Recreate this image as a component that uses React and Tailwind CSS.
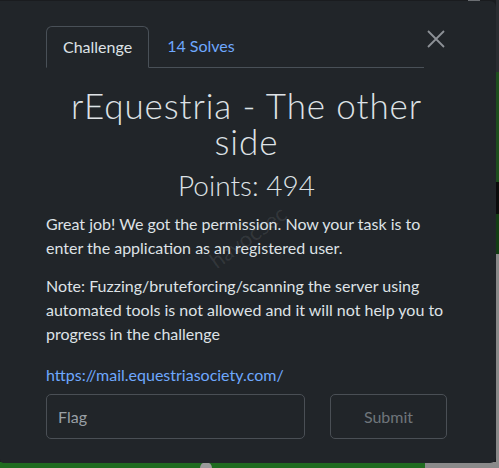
import React from 'react'

const App = () => {
  return (
    <div className="relative w-[499px] h-[468px] overflow-hidden bg-[#1a1c1f]" style={{ fontFamily: 'Lato, "Noto Sans", sans-serif' }}>
      {/* backdrop peeking out */}
      <div className="absolute right-0 top-0 w-[3px] h-full flex flex-col">
        <div className="h-[72px] bg-[#2a2d31]"></div>
        <div className="h-[110px] bg-[#1d4d1d]"></div>
        <div className="h-[32px] bg-[#0c0c0c]"></div>
        <div className="h-[40px] bg-[#143d14]"></div>
        <div className="flex-1 bg-[#8a8a8a]"></div>
      </div>
      <div className="absolute left-0 bottom-0 w-full h-[6px] flex">
        <div className="w-[425px] bg-[#1f6b1f]"></div>
        <div className="flex-1 bg-[#8a8a8a]"></div>
      </div>
      <div className="absolute left-[200px] bottom-0 w-[12px] h-[6px] bg-[#9a9a9a] rounded-t-full"></div>
      <div className="absolute left-[468px] top-0 w-[12px] h-px bg-[#6b6e72]"></div>

      {/* modal */}
      <div className="relative mt-px w-[496px] h-[462px] bg-[#212529] rounded-r-md rounded-bl-sm pl-[46px] pr-[49px] pt-[25px]">
        <button className="absolute left-[426px] top-[28px] text-[#8d9196]">
          <svg width="20" height="20" viewBox="0 0 20 20" stroke="currentColor" strokeWidth="1.8" fill="none">
            <path d="M2 2 L18 18 M18 2 L2 18" />
          </svg>
        </button>

        <div className="flex w-[378px] border-b border-[#495057] text-[16px] leading-[24px]">
          <div className="px-4 py-2 -mb-px border border-[#495057] border-b-[#212529] rounded-t-md text-[#dee2e6]">Challenge</div>
          <div className="px-[18px] py-2 text-[#6ea8fe]">14 Solves</div>
        </div>

        <h2 className="mt-[19px] text-center text-[35px] font-light leading-[36px] tracking-[0.9px] text-[#dee2e6]">
          rEquestria - The other side
        </h2>
        <h3 className="mt-[9px] text-center text-[28px] font-light leading-[34px] text-[#dee2e6]">Points: 494</h3>

        <div className="relative mt-[10px] text-[16px] leading-[24px] text-[#dee2e6]">
          <p>Great job! We got the permission. Now your task is to enter the application as an registered user.</p>
          <p className="mt-[14px]">Note: Fuzzing/bruteforcing/scanning the server using automated tools is not allowed and it will not help you to progress in the challenge</p>
          <p className="mt-[17px]">
            <a className="text-[#6ea8fe]">https://mail.equestriasociety.com/</a>
          </p>
          <span className="absolute left-[152px] top-[12px] w-[100px] text-center -rotate-[36deg] text-[22px] leading-[26px] text-[#dee2e6]/10 select-none">havocsec</span>
        </div>

        <div className="mt-[7px] flex gap-[25px]">
          <input
            placeholder="Flag"
            className="w-[259px] h-[45px] px-[11px] rounded-[5px] border border-[#4a4f55] bg-transparent text-[16px] text-[#dee2e6] placeholder:text-[#9aa0a6] outline-none"
          />
          <button className="w-[117px] h-[45px] rounded-[5px] border border-[#4a4f55] text-[16px] text-[#6f757b]">Submit</button>
        </div>
      </div>
    </div>
  )
}

export default App
